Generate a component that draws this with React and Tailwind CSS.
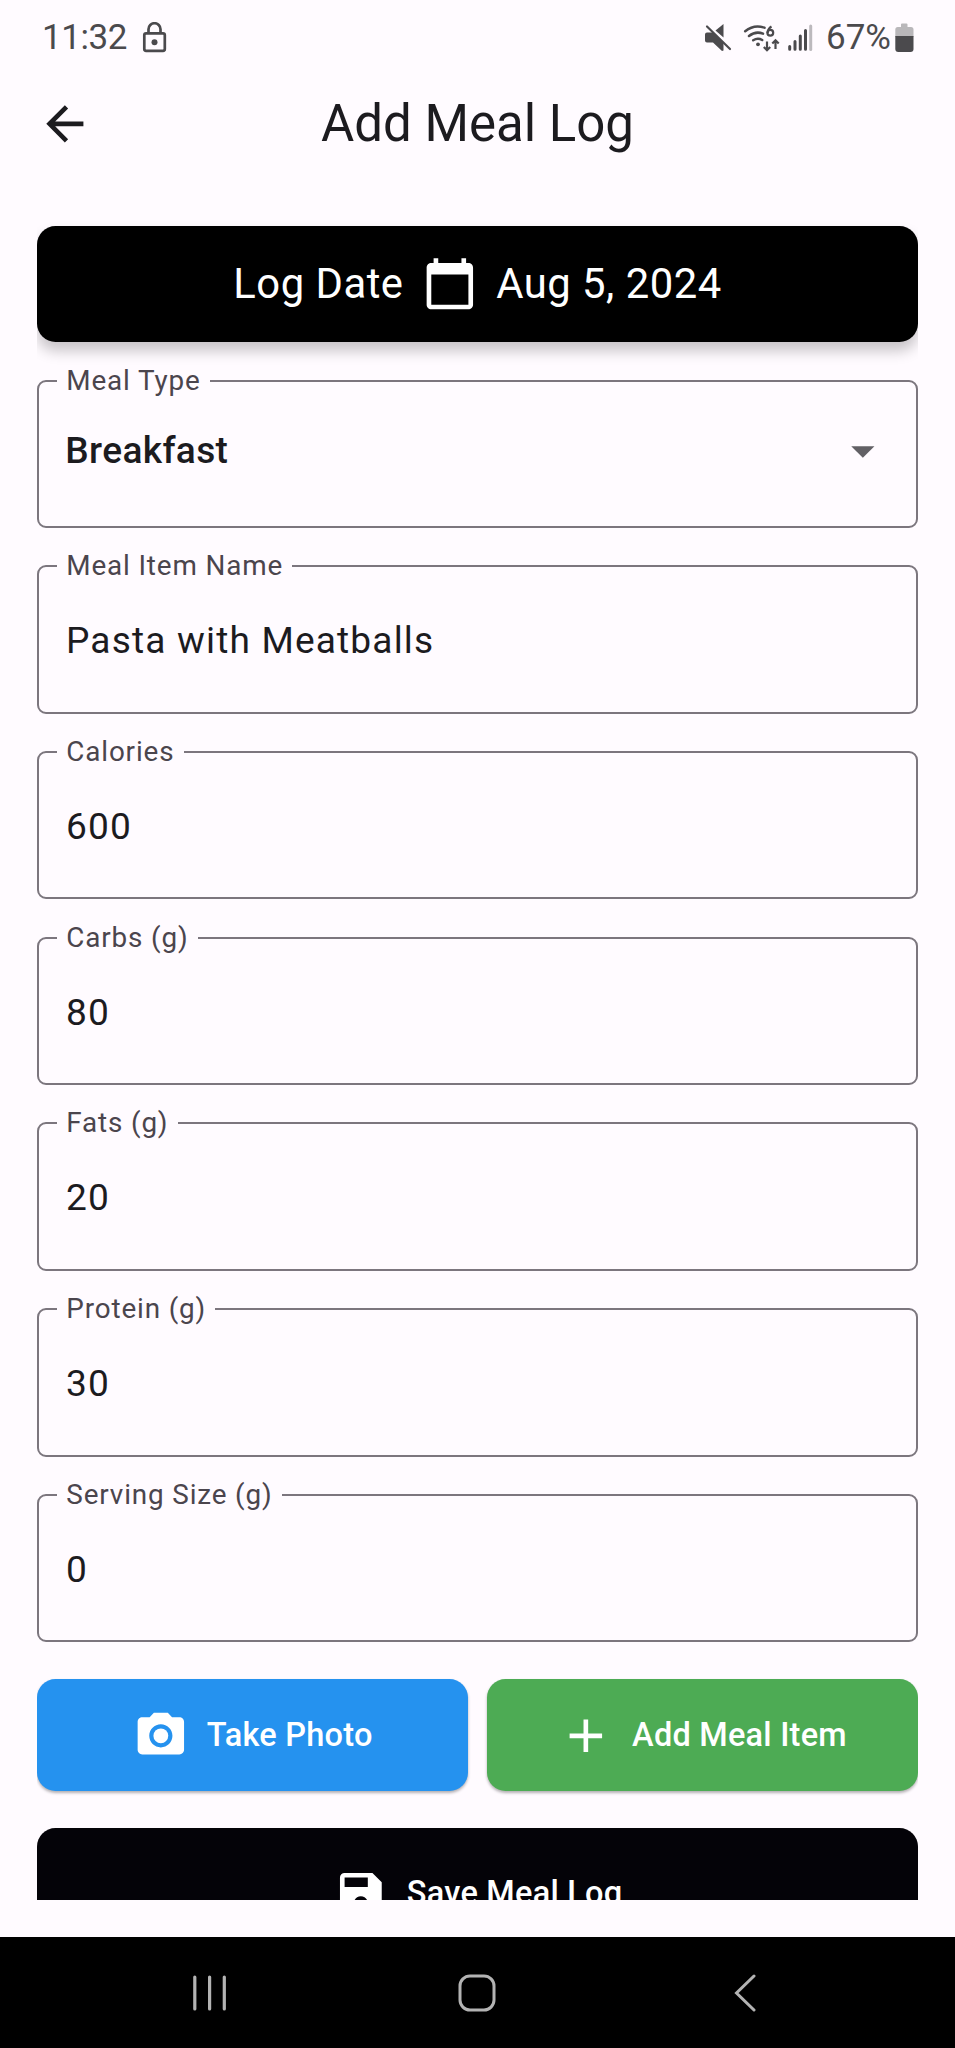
import { MdArrowBack, MdCalendarToday, MdCameraAlt, MdAdd, MdSave, MdArrowDropDown } from 'react-icons/md';

const fields = [
  { label: 'Meal Item Name', value: 'Pasta with Meatballs' },
  { label: 'Calories', value: '600' },
  { label: 'Carbs (g)', value: '80' },
  { label: 'Fats (g)', value: '20' },
  { label: 'Protein (g)', value: '30' },
  { label: 'Serving Size (g)', value: '0' },
];

function StatusBar() {
  return (
    <div className="flex h-[74px] shrink-0 items-center justify-between pt-[1px] pl-[42px] pr-[41px] text-[35px] leading-none text-[#4b4a4d]">
      <div className="flex items-center">
        <span className="tracking-[-0.450px]">11:32</span>
        <svg className="ml-[15.500px] h-[32px] w-[26px]" viewBox="0 0 26 32" fill="none" stroke="currentColor" strokeWidth="2.7">
          <rect x="2.3" y="11.3" width="20.500" height="17.6" rx="1.8" />
          <path d="M6.5 11V7.200a6 6 0 0 1 12 0V11" />
          <circle cx="12.500" cy="20.200" r="3" fill="currentColor" stroke="none" />
        </svg>
      </div>
      <div className="flex items-center">
        <svg className="h-[30px] w-[150px]" viewBox="700 22 150 30" fill="none" stroke="currentColor">
          <g fill="currentColor" stroke="none">
            <path d="M705 33.5q0-2 2-2h5.500L723.500 42V49.500l-1.500.5-9-8.500h-6q-2 0-2-2z" />
            <path d="M715.500 29.500L723.500 23v13.500z" />
          </g>
          <path d="M707 25.500l23 22.500" strokeWidth="2.200" strokeLinecap="round" />
          <path d="M745.200 30.200q9-7.300 19.300-3.500M749 35q6.800-5.300 14-2.300M753.200 39.300q4.500-3 9-.3" strokeWidth="2.500" strokeLinecap="round" />
          <circle cx="758" cy="43.300" r="1.900" fill="currentColor" stroke="none" />
          <path d="M771.500 25.500q-3.500 2-3.900 6.500" strokeWidth="2.200" />
          <circle cx="770.300" cy="31.800" r="2.900" strokeWidth="2.200" />
          <path d="M767 40.500v8.500m-3.200-3l3.200 3.200 3.200-3.200M775.500 48v-8.500m-3.200 3l3.200-3.200 3.200 3.200" strokeWidth="2.200" />
          <path d="M789.700 45.500v2.700M795 40.500v7.700M800.300 35v13.200M805.500 29.500v18.700" strokeWidth="3" strokeLinecap="round" />
          <path d="M810.700 25v23.500" stroke="#bcb9bd" strokeWidth="3" strokeLinecap="round" />
        </svg>
        <span className="-ml-[24px]">67%</span>
        <svg className="ml-[4px] h-[30px] w-[19px]" viewBox="0 0 19 30">
          <path d="M6 1.500q0-1 1-1h4.500q1 0 1 1V4H16q2.500 0 2.500 2.500V14H.3V6.500Q.3 4 2.800 4H6z" fill="#b9b7ba" />
          <path d="M.3 13h18.200v13q0 3-3 3H3.300q-3 0-3-3z" fill="#4b4a4d" />
        </svg>
      </div>
    </div>
  );
}

function Field({ label, children }) {
  return (
    <fieldset className="flex h-[148.600px] shrink-0 rounded-[9px] border-2 border-[#7c767e] pl-[18px]">
      <legend className="h-[2px] px-[9.300px] text-[27.850px] leading-[2px] tracking-[0.850px] text-[#4b454d] whitespace-nowrap">
        {label}
      </legend>
      {children}
    </fieldset>
  );
}

export default function App() {
  return (
    <div className="flex h-[2048px] w-[955px] flex-col overflow-hidden bg-[#fffbff] font-['Roboto',sans-serif] text-[#1c1b1f]">
      <StatusBar />
      <header className="grid h-[101px] shrink-0 grid-cols-[100px_1fr_100px] items-center pb-[2px] pl-[37px] pr-[37px]">
        <MdArrowBack className="size-[55.700px]" />
        <h1 className="text-center text-[51px] leading-none whitespace-nowrap">Add Meal Log</h1>
      </header>

      <main className="mx-[37px] mt-[14px] flex h-[1710.500px] w-[881px] shrink-0 flex-col overflow-hidden pt-[37px]">
        <button className="flex h-[116px] shrink-0 items-center justify-center rounded-[18.500px] bg-black text-[41.800px] leading-none tracking-[0.500px] text-white shadow-[0_9px_14px_rgba(0,0,0,0.220)]">
          <span>Log Date</span>
          <MdCalendarToday className="mx-[18.500px] size-[55.700px]" />
          <span>Aug 5, 2024</span>
        </button>

        <div className="mt-[37.500px] flex shrink-0 flex-col gap-[37.100px]">
          <Field label="Meal Type">
            <div className="flex h-[138.500px] flex-1 items-center justify-between pl-[8.300px] pr-[25.500px]">
              <span className="text-[37.100px] leading-none font-medium tracking-[0.350px]">Breakfast</span>
              <MdArrowDropDown className="size-[55.700px] text-[#626065]" />
            </div>
          </Field>
          {fields.map((f) => (
            <Field key={f.label} label={f.label}>
              <div className="flex h-[147px] flex-1 items-center pl-[9px] text-[37.100px] leading-none tracking-[1.160px]">
                {f.value}
              </div>
            </Field>
          ))}
        </div>

        <div className="mt-[37.100px] grid shrink-0 grid-cols-2 gap-[18.500px] text-[32.500px] leading-none font-medium tracking-[0.230px] text-white">
          <button className="flex h-[111.500px] items-center justify-center gap-[18.500px] rounded-[18.500px] bg-[#2592ef] pt-[1px] shadow-[0_2px_3px_rgba(0,0,0,0.300)]">
            <MdCameraAlt className="size-[55.700px]" />
            Take Photo
          </button>
          <button className="flex h-[111.500px] items-center justify-center gap-[18.500px] rounded-[18.500px] bg-[#4dab54] pt-[1px] shadow-[0_2px_3px_rgba(0,0,0,0.300)]">
            <MdAdd className="size-[55.700px]" />
            Add Meal Item
          </button>
        </div>

        <button className="mt-[37.100px] flex h-[130px] shrink-0 items-center justify-center gap-[18.500px] rounded-[18.500px] bg-[#040308] pt-[1px] text-[32.500px] leading-none font-medium tracking-[0.230px] text-white">
          <MdSave className="size-[55.700px]" />
          Save Meal Log
        </button>
      </main>

      <nav className="mt-auto flex h-[111.500px] shrink-0 items-center bg-black pt-[2px] pl-[190px] text-[#b3b3b3]">
        <svg className="h-[38px] w-[38px]" viewBox="0 0 38 38" stroke="currentColor" strokeWidth="3.200" strokeLinecap="round">
          <path d="M4.800 3v32M19.600 3v32M34.300 3v32" />
        </svg>
        <svg className="ml-[229.700px] h-[38px] w-[38px]" viewBox="0 0 38 38" fill="none" stroke="currentColor" strokeWidth="3">
          <rect x="2" y="2" width="34" height="34" rx="10" />
        </svg>
        <svg className="ml-[237px] h-[38px] w-[24px]" viewBox="0 0 24 38" fill="none" stroke="currentColor" strokeWidth="3" strokeLinecap="round" strokeLinejoin="miter">
          <path d="M21 2L3.500 19 21 36" />
        </svg>
      </nav>
    </div>
  );
}
